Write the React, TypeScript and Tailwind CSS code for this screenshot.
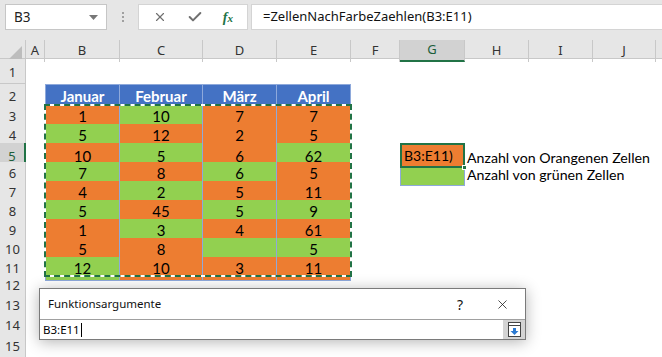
import { X, Check } from 'lucide-react';

type Fill = 'o' | 'g';

const cols = ['A', 'B', 'C', 'D', 'E', 'F', 'G', 'H', 'I', 'J'];
const gridCols = 'grid grid-cols-[26px_19px_75px_83px_74px_74px_49px_65px_64px_64px_63px_1fr]';

const rowHeights: Record<number, string> = {
  1: 'h-[25px]',
  2: 'h-[21px]',
  12: 'h-[20px]',
  13: 'h-[20px]',
  14: 'h-[21px]',
  15: 'h-[20px]',
};

const tableRows: [number | null, Fill][][] = [
  [[1, 'o'], [10, 'g'], [7, 'o'], [7, 'o']],
  [[5, 'g'], [12, 'o'], [2, 'o'], [5, 'o']],
  [[10, 'o'], [5, 'g'], [6, 'o'], [62, 'g']],
  [[7, 'g'], [8, 'o'], [6, 'g'], [5, 'o']],
  [[4, 'o'], [2, 'g'], [5, 'o'], [11, 'o']],
  [[5, 'g'], [45, 'o'], [5, 'g'], [9, 'g']],
  [[1, 'o'], [3, 'g'], [4, 'o'], [61, 'o']],
  [[5, 'o'], [8, 'o'], [null, 'g'], [5, 'g']],
  [[12, 'g'], [10, 'o'], [3, 'o'], [11, 'o']],
];

const headers = ['Januar', 'Februar', 'März', 'April'];

const cellFont = "font-['Lato','Liberation_Sans',sans-serif]";
const uiFont = "font-['Noto_Sans','Liberation_Sans',sans-serif]";

const FormulaBar = () => (
  <div className={`h-10 bg-[#e6e6e6] flex items-start pt-1 ${uiFont}`}>
    {/* Name box */}
    <div className="ml-[5px] w-[102px] h-[26px] bg-white border border-[#c6c6c6] flex items-center justify-between pl-2 pr-2">
      <span className="text-[13.5px] text-[#222]">B3</span>
      <svg width="9" height="5" viewBox="0 0 9 5">
        <path d="M0 0h9L4.5 5z" fill="#777" />
      </svg>
    </div>
    {/* dots */}
    <div className="w-[31px] h-[26px] flex flex-col items-center justify-center gap-[2px]">
      <span className="w-[2px] h-[2px] bg-[#a0a0a0]" />
      <span className="w-[2px] h-[2px] bg-[#a0a0a0]" />
      <span className="w-[2px] h-[2px] bg-[#a0a0a0]" />
    </div>
    {/* X check fx */}
    <div className="w-[110px] h-[26px] bg-white border border-[#d4d4d4] flex items-center justify-around px-1">
      <X className="w-[14px] h-[14px] text-[#707070]" strokeWidth={2} />
      <Check className="w-[16px] h-[16px] text-[#707070]" strokeWidth={3} />
      <span className="text-[#217346] italic text-[14px] font-['Liberation_Serif',serif] font-bold">
        f<span className="text-[11px]">x</span>
      </span>
    </div>
    {/* formula */}
    <div className="ml-[3px] flex-1 h-[26px] bg-white border-y border-l border-[#d4d4d4] flex items-center pl-[11px]">
      <span className="text-[13px] text-[#111]">=ZellenNachFarbeZaehlen(B3:E11)</span>
    </div>
  </div>
);

const ColumnHeader = () => (
  <div className={`${gridCols} h-[19px] bg-[#e6e6e6] border-b border-[#c8c8c8] ${uiFont}`}>
    <div className="relative border-r border-[#c8c8c8]">
      <svg className="absolute right-[3px] bottom-[3px]" width="13" height="13" viewBox="0 0 13 13">
        <path d="M13 0v13H0z" fill="#bdbdbd" />
      </svg>
    </div>
    {cols.map((c) => (
      <div
        key={c}
        className={`flex items-center justify-center text-[13px] border-r border-[#c8c8c8] ${
          c === 'G' ? 'bg-[#d2d2d2] text-[#1d5e3a] border-b-2 border-b-[#217346]' : 'text-[#333]'
        }`}
      >
        {c}
      </div>
    ))}
    <div />
  </div>
);

const fillClass = (f: Fill) => (f === 'o' ? 'bg-[#ed7d31]' : 'bg-[#92d050]');

const RowHead = ({ n }: { n: number }) => (
  <div
    className={`flex items-end justify-center pb-[1px] text-[13px] border-b border-[#c8c8c8] ${uiFont} ${
      n === 5
        ? 'bg-[#d2d2d2] text-[#1d5e3a] border-r-2 border-r-[#217346]'
        : 'bg-[#e6e6e6] text-[#333] border-r border-r-[#c8c8c8]'
    }`}
  >
    {n}
  </div>
);

const Row = ({ n }: { n: number }) => {
  const h = rowHeights[n] ?? 'h-[19px]';
  const data = n >= 3 && n <= 11 ? tableRows[n - 3] : null;
  return (
    <div className={`${gridCols} ${h}`}>
      <RowHead n={n} />
      <div />
      {n === 2 &&
        headers.map((t, i) => (
          <div
            key={t}
            className={`bg-[#4472c4] text-white font-bold text-[15px] flex items-end justify-center pb-[1px] border-t border-r border-[#8ea9db] ${cellFont} ${
              i === 0 ? 'border-l' : ''
            }`}
          >
            {t}
          </div>
        ))}
      {data &&
        data.map(([v, f], i) => (
          <div
            key={i}
            className={`${fillClass(f)} text-[15px] text-black flex items-end justify-center border-b border-r border-[#8ea9db] ${cellFont} ${
              i === 0 ? 'border-l' : ''
            }`}
          >
            {v}
          </div>
        ))}
      {!data && n !== 2 && (
        <>
          <div />
          <div />
          <div />
          <div />
        </>
      )}
      <div />
      {n === 5 ? (
        <div className={`relative bg-[#ed7d31] border-2 border-[#217346] flex items-center pl-[2px] text-[14px] text-black ${cellFont}`}>
          B3:E11)
          <span className="absolute -right-[4px] -bottom-[4px] w-[5px] h-[5px] bg-[#217346] border border-white" />
        </div>
      ) : n === 6 ? (
        <div className="bg-[#92d050] border border-[#8ea9db]" />
      ) : (
        <div />
      )}
      {n === 5 || n === 6 ? (
        <div className={`col-span-4 flex items-end pl-[2px] text-[14.2px] text-black whitespace-nowrap ${cellFont}`}>
          {n === 5 ? 'Anzahl von Orangenen Zellen' : 'Anzahl von grünen Zellen'}
        </div>
      ) : (
        <>
          <div />
          <div />
          <div />
          <div />
        </>
      )}
    </div>
  );
};

const Dialog = () => (
  <div
    className={`absolute left-[39px] top-[288px] w-[487px] h-[52px] bg-white border border-[#7a7a7a] shadow-[0_2px_14px_rgba(0,0,0,0.3)] flex flex-col ${uiFont}`}
  >
    <div className="h-[30px] flex items-center pl-[8px] text-[11.5px] text-[#111]">
      <span className="flex-1">Funktionsargumente</span>
      <span className="w-[20px] text-center mr-[25px] text-[14px]">?</span>
      <X className="w-[15px] h-[15px] mr-[15px] text-[#111]" strokeWidth={1.2} />
    </div>
    <div className="flex-1 flex border-t border-[#a0a0a0]">
      <div className="flex-1 flex items-center pl-[3px] text-[11.5px] text-black">
        B3:E11
        <span className="ml-[1px] w-px h-[14px] bg-black" />
      </div>
      <div className="w-[22px] bg-[#d4d4d4] flex items-center justify-center">
        <svg width="13" height="15" viewBox="0 0 13 15">
          <rect x="0.5" y="0.5" width="12" height="14" fill="#fff" stroke="#444" />
          <line x1="0.5" y1="3.5" x2="12.5" y2="3.5" stroke="#444" />
          <path d="M5 6h3v3h2.5L6.5 13 2.5 9H5z" fill="#2b79d0" />
        </svg>
      </div>
    </div>
  </div>
);

export default function App() {
  const rows = Array.from({ length: 15 }, (_, i) => i + 1);
  return (
    <div className="relative w-[662px] h-[357px] overflow-hidden bg-white">
      <FormulaBar />
      <ColumnHeader />
      <div className="relative">
        {rows.map((n) => (
          <Row key={n} n={n} />
        ))}
        {/* Copy-range marquee around B3:E11 */}
        <div className="absolute left-[44px] top-[45px] w-[308px] h-[173px] border-2 border-white" />
        <div className="absolute left-[44px] top-[45px] w-[308px] h-[173px] border-2 border-dashed border-[#217346]" />
      </div>
      <Dialog />
    </div>
  );
}
